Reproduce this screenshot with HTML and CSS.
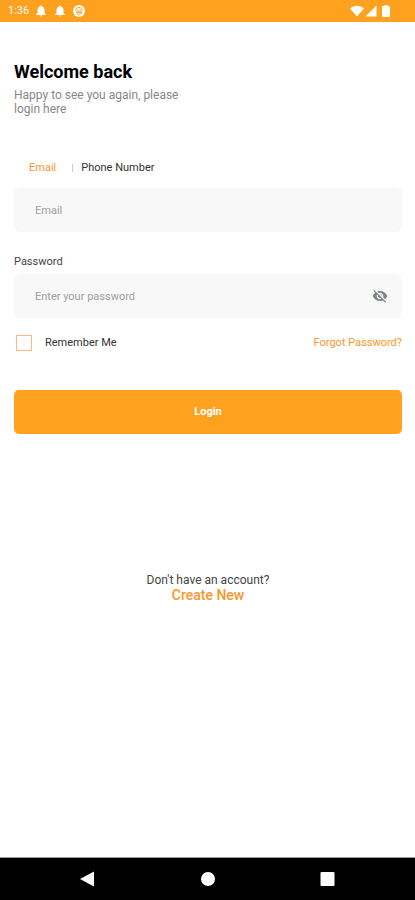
FILE: index.html
```html
<!DOCTYPE html>
<html lang="en">
<head>
    <meta charset="UTF-8">
    <meta name="viewport" content="width=device-width, initial-scale=1">
    <title>Login</title>
    <link rel="stylesheet" href="styles.css">
</head>
<body>
    <header class="status-bar">
        <div class="status-left">
            <span class="clock">1:36</span>
            <svg class="status-icon" viewBox="0 0 12 12"><path d="M6 0.5a1 1 0 0 1 1 1C8.800 2 9.500 3.500 9.500 5.200V8L11 9.700V10H1V9.700L2.500 8V5.200C2.500 3.500 3.200 2 5 1.500a1 1 0 0 1 1-1zM4.800 10.600h2.400a1.200 1 0 0 1-2.400 0z"/></svg>
            <svg class="status-icon" viewBox="0 0 12 12"><path d="M6 0.5a1 1 0 0 1 1 1C8.800 2 9.500 3.500 9.500 5.200V8L11 9.700V10H1V9.700L2.500 8V5.200C2.500 3.500 3.200 2 5 1.500a1 1 0 0 1 1-1zM4.800 10.600h2.400a1.200 1 0 0 1-2.400 0z"/></svg>
            <svg class="status-icon" viewBox="0 0 12 12">
                <circle cx="6" cy="6" r="6"/>
                <path class="cutout" d="M2.500 5.500C2.500 1.500 9.500 1.500 9.500 5.500M3 6h6M3.500 7.500c.8 3 4.200 3 5 0zM4.500 4.300h.6M6.900 4.300h.6"/>
            </svg>
        </div>
        <div class="status-right">
            <svg width="14" height="12" viewBox="0 0 14 12"><path d="M0 3.500C4-.2 10-.2 14 3.500L7 11.500z"/></svg>
            <svg width="12" height="12" viewBox="0 0 12 12"><path d="M11.500 0.500v11H0.500z"/></svg>
            <svg class="battery" width="8" height="12" viewBox="0 0 8 12"><path d="M2.500 0h3v1H7a1 1 0 0 1 1 1v9a1 1 0 0 1-1 1H1a1 1 0 0 1-1-1V2a1 1 0 0 1 1-1h1.500z"/></svg>
        </div>
    </header>

    <main class="login">
        <h1>Welcome back</h1>
        <p class="subtitle">Happy to see you again, please login here</p>

        <form>
            <div class="tabs">
                <button type="button" class="tab active">Email</button>
                <span class="divider"></span>
                <button type="button" class="tab">Phone Number</button>
            </div>
            <div class="field">
                <input type="email" placeholder="Email" aria-label="Email">
            </div>

            <label class="field-label" for="password">Password</label>
            <div class="field">
                <input type="password" id="password" placeholder="Enter your password">
                <button type="button" class="toggle" aria-label="Show password">
                    <svg width="16" height="16" viewBox="0 0 24 24"><path d="M12 7c2.760 0 5 2.240 5 5 0 .65-.13 1.260-.36 1.830l2.920 2.920c1.510-1.260 2.700-2.890 3.430-4.750-1.730-4.390-6-7.500-11-7.500-1.400 0-2.740.25-3.980.7l2.160 2.160C10.740 7.130 11.350 7 12 7zM2 4.270l2.280 2.280.46.46C3.080 8.300 1.780 10.020 1 12c1.730 4.390 6 7.500 11 7.500 1.550 0 3.030-.3 4.380-.84l.42.42L19.730 22 21 20.730 3.270 3 2 4.270zM7.530 9.800l1.550 1.550c-.05.21-.08.43-.08.65 0 1.660 1.340 3 3 3 .22 0 .44-.03.65-.08l1.550 1.550c-.67.33-1.410.53-2.200.53-2.760 0-5-2.240-5-5 0-.79.2-1.530.53-2.200zm4.310-.78l3.150 3.150.02-.16c0-1.660-1.340-3-3-3l-.17.01z"/></svg>
                </button>
            </div>

            <div class="options">
                <label class="remember"><input type="checkbox"> Remember Me</label>
                <a class="forgot" href="#">Forgot Password?</a>
            </div>

            <button type="submit" class="submit">Login</button>
        </form>

        <div class="signup">
            <p>Don't have an account?</p>
            <a href="#">Create New</a>
        </div>
    </main>

    <nav class="nav-bar">
        <button type="button" aria-label="Back"><svg width="16" height="16" viewBox="0 0 16 16"><path d="M14 0.500v15L0 8z"/></svg></button>
        <button type="button" aria-label="Home"><svg width="16" height="16" viewBox="0 0 16 16"><circle cx="8" cy="8" r="7"/></svg></button>
        <button type="button" aria-label="Recent apps"><svg width="16" height="16" viewBox="0 0 16 16"><rect x="0.500" y="1" width="14" height="14" rx="1"/></svg></button>
    </nav>
</body>
</html>
```

FILE: styles.css
```css
:root {
    --primary-color: #fea11f;
    --link-color: #fb962b;
    --field-color: #f8f8f8;
    --text-color: #444;
    --muted-color: #888;
}

* {
    margin: 0;
    padding: 0;
    box-sizing: border-box;
}

body {
    display: flex;
    flex-direction: column;
    min-height: 100vh;
    background-color: white;
    color: var(--text-color);
    font-family: Roboto, Arial, sans-serif;
    font-size: 11px;
    line-height: 16px;
}

button,
input {
    font: inherit;
    color: inherit;
    border: none;
    background: none;
}

a {
    color: var(--link-color);
    text-decoration: none;
}

svg {
    display: block;
    fill: currentColor;
}

.status-bar {
    display: flex;
    justify-content: space-between;
    align-items: center;
    height: 22px;
    padding: 0 25px 0 8px;
    background-color: var(--primary-color);
    color: white;
}

.status-left {
    display: flex;
    align-items: center;
    gap: 7px;
}

.clock {
    margin-right: -1px;
}

.status-icon {
    width: 12px;
    height: 12px;
}

.cutout {
    fill: none;
    stroke: var(--primary-color);
}

.status-right {
    display: flex;
    align-items: center;
    gap: 1px;
}

.battery {
    margin-left: 4px;
}

.login {
    flex: 1;
    padding: 39px 13px 0 14px;
}

h1 {
    color: black;
    font-size: 18px;
    font-weight: 700;
    line-height: 22px;
}

.subtitle {
    max-width: 180px;
    margin-top: 5px;
    color: var(--muted-color);
    font-size: 12px;
    line-height: 14px;
}

.tabs {
    display: flex;
    align-items: center;
    margin-top: 44px;
    padding-left: 15px;
}

.tab {
    color: #333;
}

.tab.active {
    color: var(--link-color);
}

.divider {
    width: 1px;
    height: 8px;
    margin: 0 8px 0 16px;
    background-color: #ccc;
}

.field {
    display: flex;
    align-items: center;
    height: 44px;
    margin-top: 12px;
    padding: 0 14px 0 21px;
    border-radius: 6px;
    background-color: var(--field-color);
}

.field input {
    flex: 1;
    min-width: 0;
    height: 100%;
    outline: none;
}

.field input::placeholder {
    color: #a0a0a0;
}

.toggle {
    color: #7d838a;
}

.field-label {
    display: block;
    margin-top: 22px;
}

.field-label + .field {
    margin-top: 4px;
}

.options {
    display: flex;
    justify-content: space-between;
    align-items: center;
    margin-top: 17px;
}

.remember {
    display: flex;
    align-items: center;
    gap: 13px;
    padding-left: 2px;
    color: #333;
}

.remember input {
    appearance: none;
    width: 16px;
    height: 16px;
    border: 1px solid #ffb885;
}

.remember input:checked {
    background-color: var(--primary-color);
}

.submit {
    display: block;
    width: 100%;
    height: 44px;
    margin-top: 39px;
    border-radius: 5px;
    background-color: var(--primary-color);
    color: white;
    font-weight: 700;
}

.signup {
    margin-top: 139px;
    font-size: 12px;
    line-height: 15px;
    text-align: center;
}

.signup a {
    font-size: 14px;
    font-weight: 500;
}

.nav-bar {
    display: flex;
    justify-content: center;
    align-items: center;
    gap: 104px;
    height: 43px;
    border-top: 1px solid #999;
    background-color: black;
    color: white;
}
```
